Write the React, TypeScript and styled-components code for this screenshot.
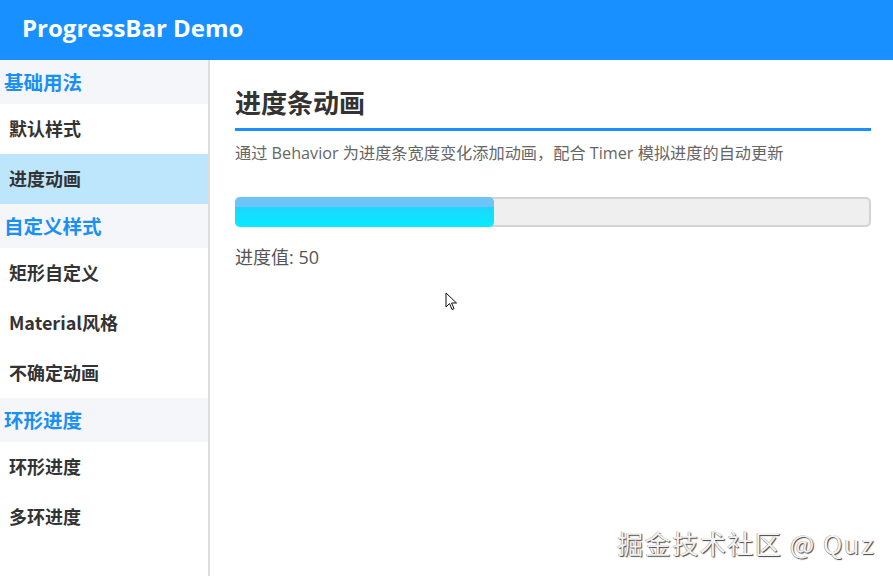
import styled, { createGlobalStyle } from "styled-components";

const GlobalStyle = createGlobalStyle`
  html, body, #root {
    margin: 0;
    height: 100%;
  }
  body {
    font-family: "Open Sans", "Noto Sans CJK SC", sans-serif;
    background: #fff;
    overflow: hidden;
  }
`;

const Page = styled.div`
  position: relative;
  display: flex;
  flex-direction: column;
  height: 576px;
`;

const Header = styled.header`
  flex: 0 0 60px;
  display: flex;
  align-items: center;
  box-sizing: border-box;
  padding: 0 0 5px 22px;
  background: #1890ff;
  color: #fff;
  font-size: 24px;
  font-weight: 700;
`;

const Body = styled.div`
  flex: 1;
  display: flex;
  min-height: 0;
`;

const Sidebar = styled.nav`
  width: 208px;
  border-right: 2px solid #dedede;
  display: flex;
  flex-direction: column;
`;

const GroupTitle = styled.div`
  height: 44px;
  box-sizing: border-box;
  display: flex;
  align-items: center;
  padding: 0 0 2px 4px;
  background: #f4f6fa;
  color: #1a90f5;
  font-family: "Noto Sans CJK SC", sans-serif;
  font-size: 19.5px;
  font-weight: 700;
`;

const NavItem = styled.div<{ $active?: boolean }>`
  height: 50px;
  box-sizing: border-box;
  display: flex;
  align-items: center;
  padding: 0 0 3px 9px;
  background: ${({ $active }) => ($active ? "#bde5fc" : "#fff")};
  color: #333;
  font-family: "Noto Sans CJK SC", sans-serif;
  font-size: 18px;
  font-weight: 700;
`;

const Content = styled.main`
  flex: 1;
  padding: 24px 22px 0 25px;
`;

const Title = styled.h2`
  margin: 0;
  padding-bottom: 8px;
  border-bottom: 3px solid #1890ff;
  color: #333;
  font-family: "Noto Sans CJK SC", sans-serif;
  font-size: 26px;
  font-weight: 700;
  line-height: 36px;
`;

const Desc = styled.p`
  margin: 10px 0 0;
  color: #666;
  font-family: "Open Sans", "Noto Sans CJK SC", sans-serif;
  font-size: 16.2px;
  line-height: 24px;
  white-space: nowrap;
`;

const Track = styled.div`
  position: relative;
  margin-top: 32px;
  height: 30px;
  box-sizing: border-box;
  border: 2px solid #d3d3d3;
  border-radius: 5px;
  background: #efefef;
`;

const Fill = styled.div`
  position: absolute;
  left: -2px;
  top: -2px;
  bottom: -2px;
  border-radius: 5px;
  background: linear-gradient(
    to bottom,
    #6fc3fb 0,
    #6fc3fb 10px,
    #1dd6fd 10px,
    #06ebff 100%
  );
`;

const ValueText = styled.div`
  margin-top: 17px;
  color: #555;
  font-family: "Open Sans", "Noto Sans CJK SC", sans-serif;
  font-size: 18px;
  line-height: 26px;
`;

const Watermark = styled.div`
  position: absolute;
  right: 18px;
  bottom: 15px;
  color: #f2f2f2;
  font-family: "Noto Sans CJK SC", sans-serif;
  font-size: 26px;
  letter-spacing: 1.5px;
  text-shadow: 1px 1px 1px #444, -0.5px -0.5px 0 #999;
`;

const Cursor = styled.svg`
  position: absolute;
  left: 445px;
  top: 292px;
`;

const groups = [
  { title: "基础用法", items: ["默认样式", "进度动画"] },
  { title: "自定义样式", items: ["矩形自定义", "Material风格", "不确定动画"] },
  { title: "环形进度", items: ["环形进度", "多环进度"] },
];

export default function App() {
  const shown = 41;
  return (
    <Page>
      <GlobalStyle />
      <Header>ProgressBar Demo</Header>
      <Body>
        <Sidebar>
          {groups.map((g) => (
            <div key={g.title}>
              <GroupTitle>{g.title}</GroupTitle>
              {g.items.map((it) => (
                <NavItem key={it} $active={it === "进度动画"}>
                  {it}
                </NavItem>
              ))}
            </div>
          ))}
        </Sidebar>
        <Content>
          <Title>进度条动画</Title>
          <Desc>通过 Behavior 为进度条宽度变化添加动画，配合 Timer 模拟进度的自动更新</Desc>
          <Track>
            <Fill style={{ width: `${shown}%` }} />
          </Track>
          <ValueText>进度值: 50</ValueText>
        </Content>
      </Body>
      <Cursor width="14" height="20" viewBox="0 0 14 20">
        <path
          d="M1 1 L1 15 L4.5 11.5 L7 17.5 L9 16.7 L6.6 11 L11.5 11 Z"
          fill="#fff"
          stroke="#111"
          strokeWidth="1"
          strokeLinejoin="miter"
        />
      </Cursor>
      <Watermark>掘金技术社区 @ Quz</Watermark>
    </Page>
  );
}
